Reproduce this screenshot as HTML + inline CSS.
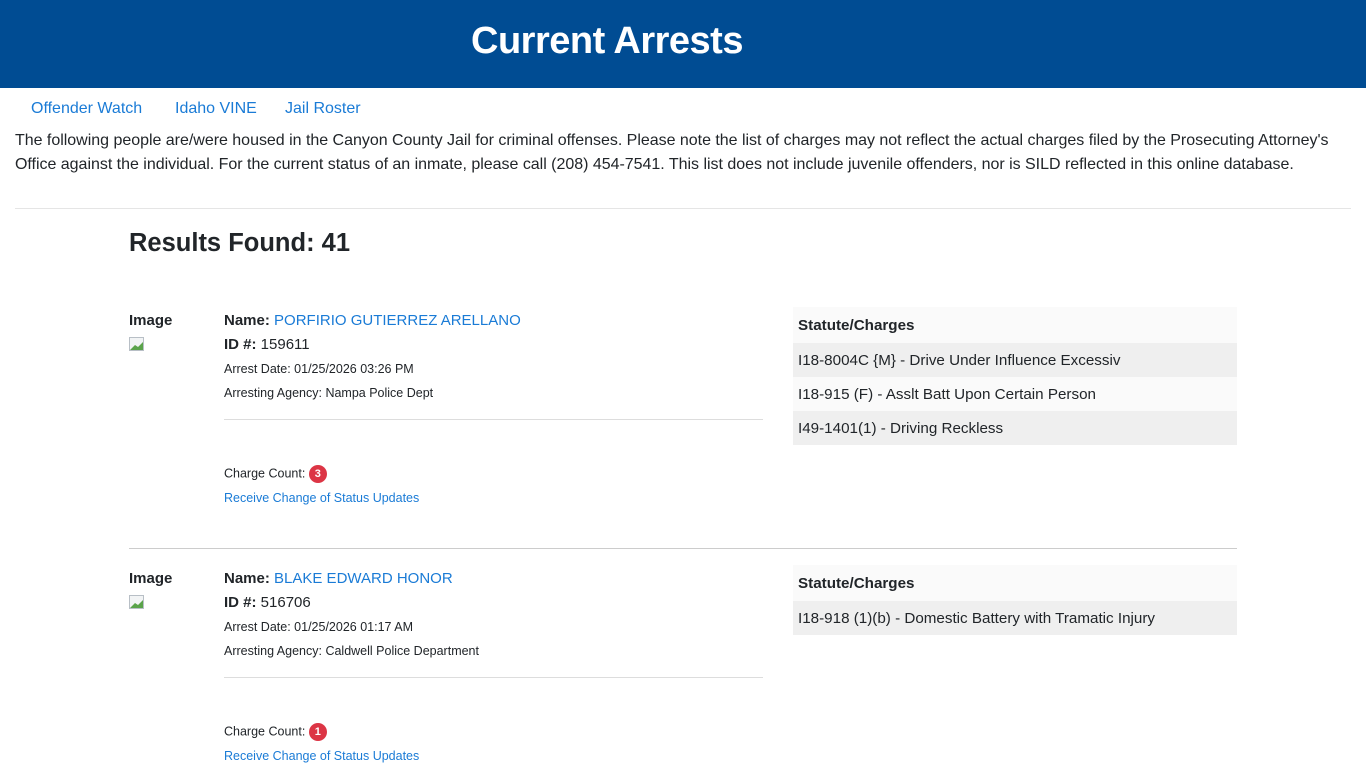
<!DOCTYPE html>
<html><head><meta charset="utf-8"><style>
*{margin:0;padding:0;box-sizing:border-box}
body{width:1366px;height:768px;overflow:hidden;background:#fff;font-family:"Liberation Sans",sans-serif;color:#212529;position:relative}
.a{position:absolute;white-space:nowrap}
.hdr{position:absolute;left:0;top:0;width:1366px;height:88px;background:#004c93}
.hdr h1{position:absolute;left:471px;top:20px;font-size:38px;font-weight:bold;color:#fff;letter-spacing:-0.5px}
.lnk{color:#1a7bd6}
.nav{font-size:16px;top:100px}
.p{left:15px;font-size:16px;color:#212529;letter-spacing:-0.02px}
.hr{position:absolute;height:1px;background:#ddd}
.b{font-weight:bold}
.img{position:absolute;width:17px;height:15px}
.s13{font-size:12.5px}
.tbl{position:absolute;left:793px;width:444px}
.tbl div{height:34px;line-height:36px;padding-left:5px;font-size:15.2px}
.badge{display:inline-block;width:18px;height:18px;border-radius:9px;background:#dc3545;color:#fff;font-size:11px;font-weight:bold;text-align:center;line-height:18px;vertical-align:middle}
</style></head><body>
<div class="hdr"><h1>Current Arrests</h1></div>
<div class="a nav lnk" style="left:31px">Offender Watch</div>
<div class="a nav lnk" style="left:175px">Idaho VINE</div>
<div class="a nav lnk" style="left:285px">Jail Roster</div>
<div class="a p" style="top:132px">The following people are/were housed in the Canyon County Jail for criminal offenses. Please note the list of charges may not reflect the actual charges filed by the Prosecuting Attorney's</div>
<div class="a p" style="top:156px">Office against the individual. For the current status of an inmate, please call (208) 454-7541. This list does not include juvenile offenders, nor is SILD reflected in this online database.</div>
<div class="hr" style="left:15px;top:208px;width:1336px;background:#e5e5e5"></div>
<div class="a b" style="left:129px;top:229px;font-size:25.5px">Results Found: 41</div>

<!-- record 1 -->
<div class="a b" style="left:129px;top:312px;font-size:15px">Image</div>
<svg class="img" style="left:129px;top:337px" viewBox="0 0 17 15"><rect x="0.5" y="0.5" width="14" height="13" fill="#f2f4f5" stroke="#b8bfc6"/><path d="M1 13 L6 8 L9 10 L14 5 L14 13Z" fill="#5aa34a"/></svg>
<div class="a" style="left:224px;top:312px;font-size:15px"><span class="b">Name:</span> <span class="lnk">PORFIRIO GUTIERREZ ARELLANO</span></div>
<div class="a" style="left:224px;top:336px;font-size:15px"><span class="b">ID #:</span> 159611</div>
<div class="a s13" style="left:224px;top:362px">Arrest Date: 01/25/2026 03:26 PM</div>
<div class="a s13" style="left:224px;top:386px">Arresting Agency: Nampa Police Dept</div>
<div class="hr" style="left:224px;top:419px;width:539px"></div>
<div class="a s13" style="left:224px;top:465px">Charge Count: <span class="badge">3</span></div>
<div class="a s13 lnk" style="left:224px;top:491px">Receive Change of Status Updates</div>
<div class="tbl" style="top:307px">
<div class="b" style="background:#fafafa;height:36px;line-height:38px">Statute/Charges</div>
<div style="background:#efefef">I18-8004C {M} - Drive Under Influence Excessiv</div>
<div style="background:#fafafa">I18-915 (F) - Asslt Batt Upon Certain Person</div>
<div style="background:#efefef">I49-1401(1) - Driving Reckless</div>
</div>
<div class="hr" style="left:129px;top:548px;width:1108px;background:#ccc"></div>

<!-- record 2 -->
<div class="a b" style="left:129px;top:570px;font-size:15px">Image</div>
<svg class="img" style="left:129px;top:595px" viewBox="0 0 17 15"><rect x="0.5" y="0.5" width="14" height="13" fill="#f2f4f5" stroke="#b8bfc6"/><path d="M1 13 L6 8 L9 10 L14 5 L14 13Z" fill="#5aa34a"/></svg>
<div class="a" style="left:224px;top:570px;font-size:15px"><span class="b">Name:</span> <span class="lnk">BLAKE EDWARD HONOR</span></div>
<div class="a" style="left:224px;top:594px;font-size:15px"><span class="b">ID #:</span> 516706</div>
<div class="a s13" style="left:224px;top:620px">Arrest Date: 01/25/2026 01:17 AM</div>
<div class="a s13" style="left:224px;top:644px">Arresting Agency: Caldwell Police Department</div>
<div class="hr" style="left:224px;top:677px;width:539px"></div>
<div class="a s13" style="left:224px;top:723px">Charge Count: <span class="badge">1</span></div>
<div class="a s13 lnk" style="left:224px;top:749px">Receive Change of Status Updates</div>
<div class="tbl" style="top:565px">
<div class="b" style="background:#fafafa;height:36px;line-height:38px">Statute/Charges</div>
<div style="background:#efefef">I18-918 (1)(b) - Domestic Battery with Tramatic Injury</div>
</div>
</body></html>
